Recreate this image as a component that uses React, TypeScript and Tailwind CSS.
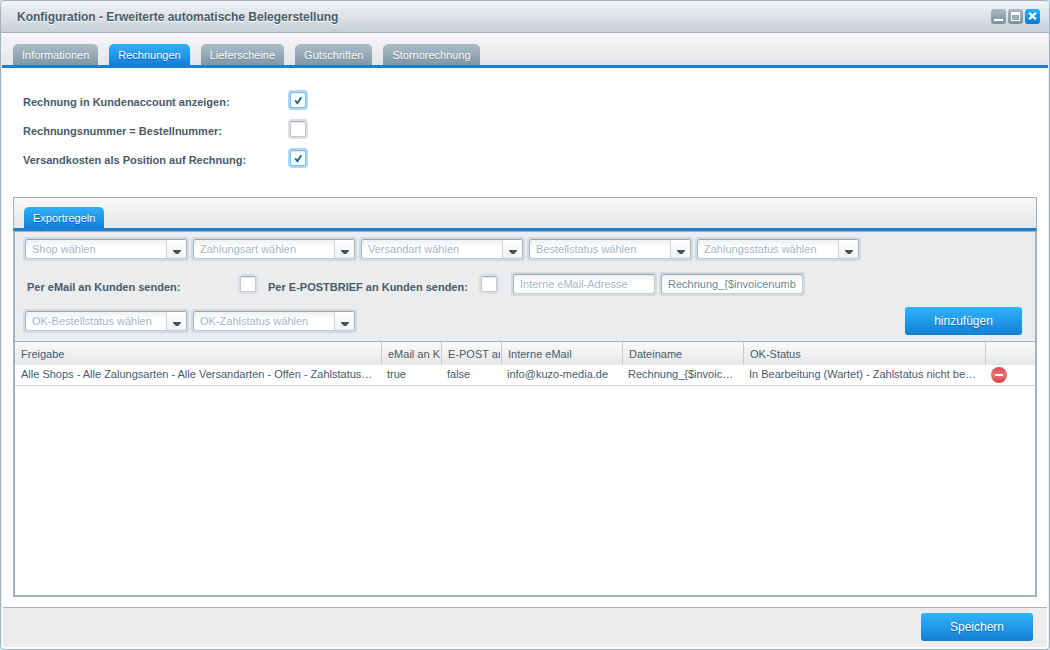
import React, { useState } from 'react';

const TABS = ['Informationen', 'Rechnungen', 'Lieferscheine', 'Gutschriften', 'Stornorechnung'];

const OPTIONS = [
  { id: 'customer-account', label: 'Rechnung in Kundenaccount anzeigen:', checked: true },
  { id: 'invoice-number', label: 'Rechnungsnummer = Bestellnummer:', checked: false },
  { id: 'shipping-position', label: 'Versandkosten als Position auf Rechnung:', checked: true },
];

const FILTERS = ['Shop wählen', 'Zahlungsart wählen', 'Versandart wählen', 'Bestellstatus wählen', 'Zahlungsstatus wählen'];
const STATUS_FILTERS = ['OK-Bestellstatus wählen', 'OK-Zahlstatus wählen'];

const COLUMNS = [
  { title: 'Freigabe', width: '' },
  { title: 'eMail an K', width: 'w-[60px]' },
  { title: 'E-POST an', width: 'w-[60px]' },
  { title: 'Interne eMail', width: 'w-[121px]' },
  { title: 'Dateiname', width: 'w-[121px]' },
  { title: 'OK-Status', width: 'w-[242px]' },
];

const RULE = [
  'Alle Shops - Alle Zalungsarten - Alle Versandarten - Offen - Zahlstatus…',
  'true',
  'false',
  'info@kuzo-media.de',
  'Rechnung_{$invoic…',
  'In Bearbeitung (Wartet) - Zahlstatus nicht be…',
];

function Tab({ label, active, onClick }: { label: string; active: boolean; onClick?: () => void }) {
  return (
    <button
      type="button"
      role="tab"
      aria-selected={active}
      onClick={onClick}
      className={
        'h-[21px] rounded-t-[5px] px-[9px] pt-px text-[11px] leading-5 whitespace-nowrap text-white ' +
        (active
          ? 'bg-linear-to-b from-[#2fb2fa] to-[#157fd6] [text-shadow:0_1px_0_#0a50d0]'
          : 'bg-linear-to-b from-[#adbdc8] to-[#7f97a5] [text-shadow:0_1px_1px_#6f8594]')
      }
    >
      {label}
    </button>
  );
}

function Checkbox({ id, defaultChecked = false }: { id: string; defaultChecked?: boolean }) {
  return (
    <span className="relative block size-5 shrink-0">
      <input
        id={id}
        type="checkbox"
        defaultChecked={defaultChecked}
        className="peer m-0.5 block size-4 appearance-none rounded-[2px] border border-[#c3c9cf] border-t-[#a7b0b8] bg-white shadow-[inset_0_1px_1px_#e4e7ea] ring-2 ring-[#dbdfe4] checked:border-[#7fbdec] checked:ring-[#aed8f8]"
      />
      <svg viewBox="0 0 20 20" className="pointer-events-none absolute inset-0 hidden size-5 peer-checked:block" aria-hidden="true">
        <path d="M7.200 10.400 L9.400 13.200 L13.300 7.200" fill="none" stroke="#1464a5" strokeWidth="1.900" />
      </svg>
    </span>
  );
}

function Combo({ label }: { label: string }) {
  return (
    <div className="relative w-[166px] rounded-[3px] bg-[#d3dae1] p-0.5">
      <select
        aria-label={label}
        className="block h-5 w-full appearance-none rounded-[3px] border border-[#a9b5c0] border-t-[#98a5b1] border-b-[#c3ccd4] bg-white bg-linear-to-b from-[#eef0f1] to-white to-40% pl-1.5 text-[11px] leading-4 text-[#a3b6c4] outline-none"
      >
        <option>{label}</option>
      </select>
      <span className="pointer-events-none absolute top-[3px] right-[3px] flex h-[18px] w-5 items-center justify-center rounded-r-[2px] border-l border-[#cbd2d8] bg-linear-to-b from-white to-[#f1f2f4]">
        <svg width="8" height="4" viewBox="0 0 8 4" className="mt-1.5" aria-hidden="true">
          <path d="M0 0 H8 V1 L5 4 H3 L0 1 Z" fill="#434f59" />
        </svg>
      </span>
    </div>
  );
}

function TextField(props: React.InputHTMLAttributes<HTMLInputElement>) {
  return (
    <div className="w-[146px] rounded-[3px] bg-[#d3dae1] p-0.5">
      <input
        type="text"
        {...props}
        className="block h-5 w-full rounded-[3px] border border-[#a9b5c0] border-t-[#98a5b1] border-r-[#c3ccd4] border-b-[#c3ccd4] bg-white bg-linear-to-b from-[#eef0f1] to-white to-40% px-1.5 text-[11px] text-[#6f8798] outline-none placeholder:text-[#a3b6c4]"
      />
    </div>
  );
}

function PrimaryButton({ children, wide = false }: { children: React.ReactNode; wide?: boolean }) {
  return (
    <button
      type="button"
      className={
        'h-7 rounded-[3px] bg-linear-to-b from-[#2fb4fb] to-[#147fd5] text-[12px] text-white [text-shadow:0_1px_1px_#0d5fa8] ' +
        (wide ? 'w-[117px]' : 'w-[112px]')
      }
    >
      {children}
    </button>
  );
}

function WindowButtons() {
  return (
    <div className="flex gap-0.5">
      <button type="button" aria-label="Minimieren" className="size-[15px] rounded-[3px] bg-linear-to-b from-[#a9b9c4] to-[#7d929f]">
        <svg viewBox="0 0 15 15" className="size-[15px]" aria-hidden="true">
          <path d="M3 10h9v2H3z" fill="#fff" />
        </svg>
      </button>
      <button type="button" aria-label="Maximieren" className="size-[15px] rounded-[3px] bg-linear-to-b from-[#a9b9c4] to-[#7d929f]">
        <svg viewBox="0 0 15 15" className="size-[15px]" aria-hidden="true">
          <path fillRule="evenodd" d="M3 3h9v9H3z M4 6v5h7V6z" fill="#fff" />
          <path d="M5 7h5v3H5z" fill="#9fb1bd" />
        </svg>
      </button>
      <button type="button" aria-label="Schließen" className="size-[15px] rounded-[3px] bg-linear-to-b from-[#22b2fb] to-[#0a7cd8]">
        <svg viewBox="0 0 15 15" className="size-[15px]" aria-hidden="true">
          <path d="M4.200 3.700 L10.800 10.300 M10.800 3.700 L4.200 10.300" fill="none" stroke="#fff" strokeWidth="2.200" />
        </svg>
      </button>
    </div>
  );
}

export default function App() {
  const [active, setActive] = useState('Rechnungen');

  return (
    <div className="min-h-screen bg-[#c9e0ee] font-['Liberation_Sans',Arial,sans-serif] text-[11px] text-[#475c6a]">
      <div className="flex min-h-screen flex-col overflow-hidden rounded-[5px] border border-[#a3b3c1] bg-white">
        <header className="flex h-8 shrink-0 items-center justify-between border-b border-[#a3b3be] bg-linear-to-b from-[#f3f4f4] to-[#c6cfd7] pr-[9px] pl-4">
          <h1 className="text-[12px] font-bold [text-shadow:0_1px_0_#ffffff]">Konfiguration - Erweiterte automatische Belegerstellung</h1>
          <WindowButtons />
        </header>

        <div className="flex grow flex-col border-x border-[#e9eef2]">
          <div role="tablist" className="flex h-[35px] shrink-0 items-end gap-[11px] border-b-3 border-[#1a80d5] bg-linear-to-b from-[#f7f7f8] to-[#e4e5e8] px-[11px]">
            {TABS.map((tab) => (
              <Tab key={tab} label={tab} active={tab === active} onClick={() => setActive(tab)} />
            ))}
          </div>

          <main className="flex grow flex-col px-[11px] pt-[22px] pb-2.5">
            <div className="flex flex-col gap-[9px] pl-2.5">
              {OPTIONS.map((o) => (
                <div key={o.id} className="flex h-5">
                  <label htmlFor={o.id} className="w-[265px] pt-1 leading-4 font-bold">
                    {o.label}
                  </label>
                  <Checkbox id={o.id} defaultChecked={o.checked} />
                </div>
              ))}
            </div>

            <section className="mt-[29px] flex grow flex-col">
              <div role="tablist" className="flex h-[34px] shrink-0 items-end border border-b-3 border-[#a3b3be] border-b-[#1a80d5] bg-linear-to-b from-[#f7f7f8] to-[#e4e5e8] px-2.5">
                <Tab label="Exportregeln" active />
              </div>

              <div className="flex grow flex-col border-2 border-t border-[#a3b3be] bg-white">
                <div className="flex flex-col border-b border-[#a3b3be] bg-[#ebecee] px-2 pt-[5px] pb-1.5">
                  <div className="flex flex-wrap gap-0.5">
                    {FILTERS.map((f) => (
                      <Combo key={f} label={f} />
                    ))}
                  </div>
                  <div className="mt-[11px] flex">
                    <label htmlFor="rule-mail" className="w-[215px] pt-[7px] pl-1 leading-4 font-bold">
                      Per eMail an Kunden senden:
                    </label>
                    <div className="pt-0.5">
                      <Checkbox id="rule-mail" />
                    </div>
                    <label htmlFor="rule-epost" className="w-[221px] pt-[7px] pl-2.5 leading-4 font-bold whitespace-nowrap">
                      Per E-POSTBRIEF an Kunden senden:
                    </label>
                    <div className="pt-0.5">
                      <Checkbox id="rule-epost" />
                    </div>
                    <div className="ml-3 flex gap-0.5">
                      <TextField aria-label="Interne eMail-Adresse" placeholder="Interne eMail-Adresse" />
                      <TextField aria-label="Dateiname" defaultValue="Rechnung_{$invoicenumb" />
                    </div>
                  </div>
                  <div className="mt-[11px] flex items-center justify-between pr-[5px]">
                    <div className="flex gap-0.5">
                      {STATUS_FILTERS.map((f) => (
                        <Combo key={f} label={f} />
                      ))}
                    </div>
                    <PrimaryButton wide>hinzufügen</PrimaryButton>
                  </div>
                </div>

                <table className="w-full table-fixed border-separate border-spacing-0 text-left">
                  <thead>
                    <tr className="h-[23px] bg-linear-to-b from-[#fafafa] to-[#e6e7e9]">
                      {COLUMNS.map((c) => (
                        <th key={c.title} className={'overflow-hidden p-0 font-normal ' + c.width}>
                          <div className="h-[23px] border-r border-[#c3cad0] pr-px pl-1.5">
                            <div className="overflow-hidden leading-6 whitespace-nowrap">{c.title}</div>
                          </div>
                        </th>
                      ))}
                      <td className="w-[49px] p-0" />
                    </tr>
                  </thead>
                  <tbody>
                    <tr>
                      {RULE.map((value, i) => (
                        <td
                          key={value}
                          className={
                            'truncate border-b border-[#ccd3d8] pt-0 pr-0 pb-0.5 leading-[18px] ' + (i === 0 ? 'pl-1.5' : 'pl-[5px]')
                          }
                        >
                          {value}
                        </td>
                      ))}
                      <td className="border-b border-[#ccd3d8] py-0 pr-0 pl-[5px]">
                        <button type="button" aria-label="Löschen" className="block size-4">
                          <svg viewBox="0 0 16 16" className="size-4" aria-hidden="true">
                            <defs>
                              <linearGradient id="delete-fill" x1="0" y1="0" x2="0" y2="1">
                                <stop offset="0" stopColor="#e0474b" />
                                <stop offset="0.5" stopColor="#e8757a" />
                                <stop offset="1" stopColor="#cf3c3f" />
                              </linearGradient>
                            </defs>
                            <circle cx="8" cy="8" r="8" fill="url(#delete-fill)" />
                            <rect x="4" y="7" width="8" height="2" rx="0.500" fill="#fff" />
                          </svg>
                        </button>
                      </td>
                    </tr>
                  </tbody>
                </table>
              </div>
            </section>
          </main>

          <footer className="mx-px mb-0.5 flex h-10 shrink-0 items-start justify-end border-t border-[#a3b3be] bg-[#ebecee] pt-[5px] pr-3.5">
            <PrimaryButton>Speichern</PrimaryButton>
          </footer>
        </div>
      </div>
    </div>
  );
}
